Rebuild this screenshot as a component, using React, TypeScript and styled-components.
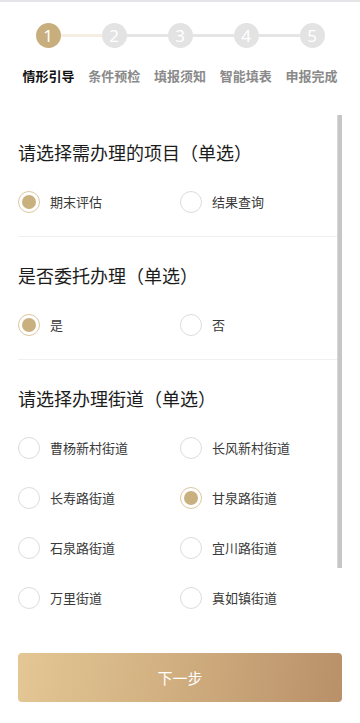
import React, { useState } from "react";
import styled, { createGlobalStyle } from "styled-components";

const Global = createGlobalStyle`
  * { box-sizing: border-box; }
  html, body { margin: 0; padding: 0; background: #fff; }
  body { font-family: "Noto Sans CJK SC", "Noto Sans", sans-serif; }
`;

const Page = styled.div`
  width: 360px;
  min-height: 723px;
  background: #fff;
  border-top: 2px solid #e4e4e9;
  display: flex;
  flex-direction: column;
`;

const Header = styled.div`
  padding-top: 21px;
`;

const CircleRow = styled.div`
  display: flex;
  align-items: center;
  padding: 0 35.5px;
`;

const StepCircle = styled.div<{ $active?: boolean }>`
  width: 25px;
  height: 25px;
  border-radius: 50%;
  flex: none;
  background: ${(p) => (p.$active ? "#c8ae7c" : "#e3e3e3")};
  color: #fff;
  font-family: "Noto Sans", "Liberation Sans", sans-serif;
  font-size: 17px;
  font-weight: 400;
  line-height: 25px;
  text-align: center;
`;

const StepLine = styled.div<{ $done?: boolean }>`
  flex: 1;
  height: 3px;
  background: ${(p) => (p.$done ? "#f4eee3" : "#e5e5e5")};
`;

const LabelRow = styled.div`
  display: grid;
  grid-template-columns: repeat(5, 1fr);
  padding: 0 15.5px;
  margin-top: 19px;
`;

const StepLabel = styled.div<{ $active?: boolean }>`
  text-align: center;
  font-size: 13px;
  line-height: 18px;
  font-weight: 700;
  color: ${(p) => (p.$active ? "#111" : "#8a8a8a")};
  white-space: nowrap;
`;

const Body = styled.div`
  display: flex;
  margin-top: 29px;
  padding-left: 18px;
  padding-right: 18px;
`;

const Content = styled.div`
  flex: 1;
  min-width: 0;
`;

const ScrollThumb = styled.div`
  width: 5px;
  height: 453px;
  flex: none;
  margin-top: 1px;
  background: #c6c6c6;
  border-left: 1px solid #d8d8d8;
`;

const Section = styled.div<{ $last?: boolean }>`
  padding: 26px 0 9px;
  border-bottom: ${(p) => (p.$last ? "none" : "1px solid #f0f0f0")};
`;

const Title = styled.div`
  font-size: 18px;
  line-height: 24px;
  color: #1c1c1c;
  margin-bottom: 13px;
`;

const Grid = styled.div`
  display: grid;
  grid-template-columns: 162px 1fr;
  grid-auto-rows: 50px;
`;

const Option = styled.label`
  display: flex;
  align-items: center;
  gap: 10px;
  cursor: pointer;
`;

const RadioCircle = styled.span<{ $checked?: boolean }>`
  width: 22px;
  height: 22px;
  border-radius: 50%;
  flex: none;
  border: 1px solid ${(p) => (p.$checked ? "#dcc7a0" : "#dcdcdc")};
  display: flex;
  align-items: center;
  justify-content: center;
  &::after {
    content: "";
    width: 14px;
    height: 14px;
    border-radius: 50%;
    background: ${(p) => (p.$checked ? "#c9b07f" : "transparent")};
  }
`;

const OptionText = styled.span`
  font-size: 13px;
  color: #3a3a3a;
  line-height: 18px;
`;

const Footer = styled.div`
  padding: 21px 18px 29px;
`;

const NextButton = styled.button`
  width: 100%;
  height: 49px;
  border: none;
  border-radius: 4px;
  background: linear-gradient(100deg, #e3c794 0%, #d2b081 45%, #b99069 100%);
  color: #fff;
  font-family: "Noto Sans CJK SC", sans-serif;
  font-size: 15px;
  cursor: pointer;
`;

const steps = ["情形引导", "条件预检", "填报须知", "智能填表", "申报完成"];

type Q = { title: string; options: string[]; selected: string };

const questions: Q[] = [
  { title: "请选择需办理的项目（单选）", options: ["期末评估", "结果查询"], selected: "期末评估" },
  { title: "是否委托办理（单选）", options: ["是", "否"], selected: "是" },
  {
    title: "请选择办理街道（单选）",
    options: [
      "曹杨新村街道",
      "长风新村街道",
      "长寿路街道",
      "甘泉路街道",
      "石泉路街道",
      "宜川路街道",
      "万里街道",
      "真如镇街道",
    ],
    selected: "甘泉路街道",
  },
];

export default function App() {
  const [sel, setSel] = useState<string[]>(questions.map((q) => q.selected));
  return (
    <>
      <Global />
      <Page>
        <Header>
          <CircleRow>
            {steps.map((_, i) => (
              <React.Fragment key={i}>
                <StepCircle $active={i === 0}>{i + 1}</StepCircle>
                {i < steps.length - 1 && <StepLine $done={i === 0} />}
              </React.Fragment>
            ))}
          </CircleRow>
          <LabelRow>
            {steps.map((s, i) => (
              <StepLabel key={s} $active={i === 0}>
                {s}
              </StepLabel>
            ))}
          </LabelRow>
        </Header>
        <Body>
          <Content>
            {questions.map((q, qi) => (
              <Section key={q.title} $last={qi === questions.length - 1}>
                <Title>{q.title}</Title>
                <Grid>
                  {q.options.map((o) => (
                    <Option
                      key={o}
                      onClick={() =>
                        setSel((prev) => prev.map((v, k) => (k === qi ? o : v)))
                      }
                    >
                      <RadioCircle $checked={sel[qi] === o} />
                      <OptionText>{o}</OptionText>
                    </Option>
                  ))}
                </Grid>
              </Section>
            ))}
          </Content>
          <ScrollThumb />
        </Body>
        <Footer>
          <NextButton>下一步</NextButton>
        </Footer>
      </Page>
    </>
  );
}
